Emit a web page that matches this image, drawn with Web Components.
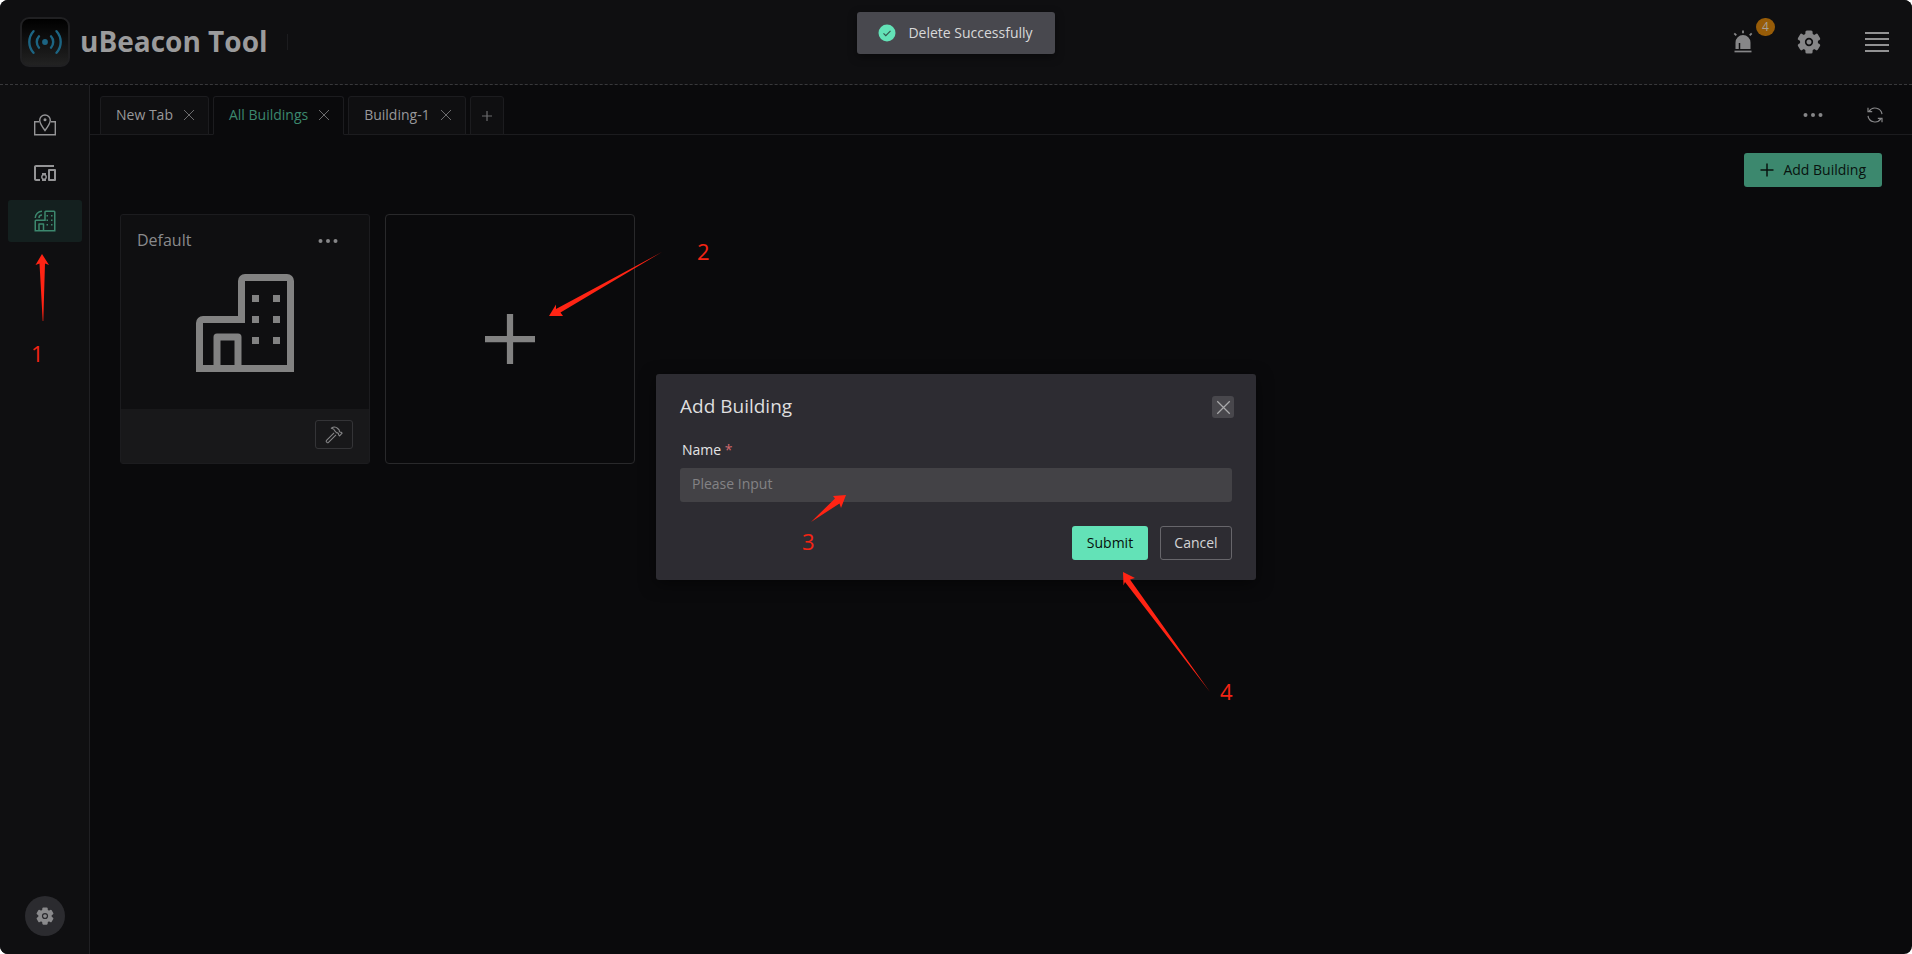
<!DOCTYPE html>
<html lang="en">
<head>
<meta charset="utf-8">
<title>uBeacon Tool</title>
<style>
html, body { margin: 0; height: 100%; background: #fff; }
body { font: 15px/24px "Open Sans", "Noto Sans", sans-serif; color: #868688; --accent: #3c886e; --line: #1c1c1f; --panel: #0f0f11; }
</style>
</head>
<body>
<beacon-app></beacon-app>
<script>
const icons = {
  map: '<svg viewBox="0 0 24 24" width="24" height="24" fill="none" stroke="currentColor" stroke-width="1.4"><path d="M6 8.700H1.700v13.100h20.600V8.700H18"/><path d="M12 17.500C9 13.600 6.700 10.600 6.700 7.300a5.300 5.300 0 0 1 10.600 0c0 3.300-2.300 6.300-5.300 10.200z"/><circle cx="12" cy="6.800" r="1.500" fill="currentColor" stroke="none"/></svg>',
  devices: '<svg viewBox="0 0 24 24" width="24" height="24" fill="currentColor"><path d="M3 6h18V4H3c-1.100 0-2 .9-2 2v12c0 1.100.9 2 2 2h4v-2H3V6zm10 6H9v1.780c-.61.55-1 1.330-1 2.220s.39 1.670 1 2.220V20h4v-1.780c.61-.55 1-1.340 1-2.220s-.39-1.670-1-2.220V12zm-2 5.500c-.83 0-1.500-.67-1.500-1.500s.67-1.500 1.500-1.500 1.500.67 1.500 1.500-.67 1.500-1.500 1.500zM22 8h-6c-.5 0-1 .5-1 1v10c0 .5.5 1 1 1h6c.5 0 1-.5 1-1V9c0-.5-.5-1-1-1zm-1 10h-4v-8h4v8z"/></svg>',
  smart: '<svg viewBox="0 0 32 32" width="24" height="24" fill="currentColor"><path d="M28 2H17a2 2 0 0 0-2 2v10H4a2 2 0 0 0-2 2v14h28V4a2 2 0 0 0-2-2ZM9 28v-7h4v7Zm19 0H15v-8a1 1 0 0 0-1-1H8a1 1 0 0 0-1 1v8H4V16h13V4h11Z"/><path d="M18 8h2v2h-2zM24 8h2v2h-2zM18 14h2v2h-2zM24 14h2v2h-2zM18 20h2v2h-2zM24 20h2v2h-2z"/><path d="M3 12a9 9 0 0 1 9-9M8 12a4 4 0 0 1 4-4" fill="none" stroke="currentColor" stroke-width="2"/></svg>',
  building: '<svg viewBox="0 0 32 32" width="112" height="112" fill="currentColor"><path d="M28 2H16a2 2 0 0 0-2 2v10H4a2 2 0 0 0-2 2v14h28V4a2 2 0 0 0-2-2ZM9 28v-7h4v7Zm19 0H15v-8a1 1 0 0 0-1-1H8a1 1 0 0 0-1 1v8H4V16H16V4h12Z"/><path d="M18 8h2v2h-2zM24 8h2v2h-2zM18 14h2v2h-2zM24 14h2v2h-2zM18 20h2v2h-2zM24 20h2v2h-2z"/></svg>',
  bigplus: '<svg viewBox="0 0 32 32" width="100" height="100" fill="currentColor"><path d="M17 15V8h-2v7H8v2h7v7h2v-7h7v-2z"/></svg>',
  plus: '<svg viewBox="0 0 14 14" width="14" height="14" stroke="currentColor" stroke-width="1.500"><path d="M7 .5v13M.5 7h13"/></svg>',
  thinplus: '<svg viewBox="0 0 12 12" width="12" height="12" stroke="currentColor" stroke-width="1.200"><path d="M6 1v10M1 6h10"/></svg>',
  x: '<svg viewBox="0 0 12 12" width="12" height="12" stroke="currentColor" stroke-width="1"><path d="M1 1l10 10M11 1L1 11"/></svg>',
  dots: '<svg viewBox="0 0 20 6" width="20" height="6" fill="currentColor"><circle cx="2.500" cy="3" r="2"/><circle cx="10" cy="3" r="2"/><circle cx="17.500" cy="3" r="2"/></svg>',
  gear: '<svg viewBox="-12 -12 24 24" width="100%" height="100%" fill="currentColor"><defs><mask id="m"><rect x="-12" y="-12" width="24" height="24" fill="#fff"/><circle r="3.300" fill="none" stroke="#000" stroke-width="1.700"/></mask></defs><g mask="url(#m)"><circle r="9"/><rect x="-3.600" y="-11.500" width="7.200" height="23" rx="1.500"/><rect x="-3.600" y="-11.500" width="7.200" height="23" rx="1.500" transform="rotate(60)"/><rect x="-3.600" y="-11.500" width="7.200" height="23" rx="1.500" transform="rotate(120)"/></g></svg>',
  siren: '<svg viewBox="0 0 24 24" width="24" height="24"><path d="M4.500 19v-6.500a7.500 7.500 0 0 1 15 0V19z" fill="currentColor"/><path d="M8.500 19v-6" stroke="#0f0f11" stroke-width="1.500"/><path d="M3.500 21.500h17" stroke="currentColor" stroke-width="1.700"/><path d="M12 .5v2.800M3.300 3.300l2 2M20.700 3.300l-2 2" stroke="currentColor" stroke-width="1.800"/></svg>',
  menu: '<svg viewBox="0 0 24 22" width="24" height="22" stroke="currentColor" stroke-width="2"><path d="M0 2h24M0 8h24M0 14h24M0 20h24"/></svg>',
  sync: '<svg viewBox="0 0 18 18" width="18" height="18" fill="none" stroke="currentColor" stroke-width="1.200"><path d="M2 9.800A7.100 7.100 0 0 0 15 12.700M16 8.200A7.100 7.100 0 0 0 3 5.300"/><path d="M2 1.700v4h4.200M16 16.300v-4h-4.200"/></svg>',
  hammer: '<svg viewBox="0 0 18 18" width="18" height="18" fill="none" stroke="currentColor" stroke-width="1.100" stroke-linejoin="round"><path d="M9.100 6.900L1.500 14.400a1.100 1.100 0 0 0 0 1.500l.5.500a1.100 1.100 0 0 0 1.500 0L11 8.800"/><path d="M6.300 2.300C8.500.6 11 .8 12.700 2.500l1.600 1.700v1.200l.8.800h1l1 1-2.500 2.600-1-1v-1l-.8-.9h-1.100L10 5.200C9.500 3.600 8 2.500 6.300 2.300z"/></svg>',
  ok: '<svg viewBox="0 0 18 18" width="18" height="18"><circle cx="9" cy="9" r="8.500" fill="#63e2b7"/><path d="M5.500 9.300l2.300 2.300 4.700-4.700" fill="none" stroke="#35564d" stroke-width="1.200"/></svg>',
  logo: '<svg viewBox="0 0 36 26" width="36" height="26" fill="none" stroke="#1c6482" stroke-width="2.400" stroke-linecap="round"><circle cx="18" cy="13" r="2.900" fill="#1c6482" stroke="none"/><path d="M12 7.300a8.500 8.500 0 0 0 0 11.400M24 7.300a8.500 8.500 0 0 1 0 11.400M6.500 2.200a16 16 0 0 0 0 21.600M29.500 2.200a16 16 0 0 1 0 21.600"/></svg>'
};
const base = `*{box-sizing:border-box}svg{display:block}button{font:inherit;color:inherit;background:none;border:0;padding:0;margin:0;cursor:pointer}`;
function define(name, css, html) {
  customElements.define(name, class extends HTMLElement {
    constructor() {
      super();
      const root = this.attachShadow({ mode: 'open' });
      root.innerHTML = `<style>${base}${css}</style>${html}`;
    }
  });
}

define('app-header', `
:host{display:flex;align-items:center;height:85px;padding:0 23px 0 20px;background:var(--panel);border-bottom:1px dashed #38383b}
.logo{display:grid;place-items:center;width:50px;height:50px;border:2px solid #202022;border-radius:9px;background:linear-gradient(#000,#222)}
h1{margin:0 0 0 10px;padding-bottom:2px;font-size:28px;line-height:40px;font-weight:700;color:#9b9b9c}
.rule{width:1px;height:16px;margin-left:19px;background:#1c1c1f}
.tools{display:flex;align-items:center;margin-left:auto}
.alarm{position:relative;margin-right:42px}
.badge{position:absolute;left:25px;top:-12px;width:19px;height:18px;border-radius:9px;background:#975c08;color:#a5a09a;font-size:12px;line-height:18px;text-align:center}
.gear{width:24px;height:24px;margin-right:44px}
.menu{color:#929293}
`, `<span class="logo">${icons.logo}</span><h1>uBeacon Tool</h1><span class="rule"></span>
<div class="tools"><button class="alarm" aria-label="Alarms">${icons.siren}<span class="badge">4</span></button>
<button class="gear" aria-label="Settings">${icons.gear}</button><button class="menu" aria-label="Menu">${icons.menu}</button></div>`);

define('side-bar', `
:host{display:flex;flex-direction:column;justify-content:space-between;width:90px;padding:19px 7px 18px 8px;background:var(--panel);border-right:1px solid #202023}
nav{display:flex;flex-direction:column;gap:6px}
a{display:grid;place-items:center;height:42px;border-radius:3px;color:#949496}
a[aria-current]{background:#14201f;color:var(--accent)}
.round{display:grid;place-items:center;align-self:center;width:40px;height:40px;border-radius:50%;background:#2b2b2f;color:#8a8a8c}
.round span{width:18px;height:18px}
`, `<nav><a href="#map" aria-label="Map">${icons.map}</a><a href="#devices" aria-label="Devices">${icons.devices}</a><a href="#buildings" aria-label="Buildings" aria-current="page">${icons.smart}</a></nav>
<button class="round" aria-label="Preferences"><span>${icons.gear}</span></button>`);

define('tab-item', `
:host{display:flex;align-items:center;height:39px;padding:0 13px 2px 15px;border:1px solid var(--line);border-radius:3px 3px 0 0;background:var(--panel);color:#98989a}
:host([selected]){color:var(--accent);background:transparent;border-bottom-color:#0a0a0c}
.close{color:#6c6c6e}
.name{font-size:14px;line-height:20px;margin-right:10px}
`, `<button class="name"><slot></slot></button><button class="close" aria-label="Close tab">${icons.x}</button>`);

define('tab-strip', `
:host{display:flex;align-items:flex-start;height:50px;padding:11px 28px 0 10px;background:linear-gradient(var(--line),var(--line)) bottom/100% 1px no-repeat}
.tabs{display:flex;gap:4px}
.new{display:grid;place-items:center;width:34px;height:39px;border:1px solid var(--line);border-radius:3px 3px 0 0;background:var(--panel);color:#6c6c6e}
.actions{display:flex;align-items:center;gap:43px;height:38px;margin-left:auto}
`, `<div class="tabs"><tab-item>New Tab</tab-item><tab-item selected>All Buildings</tab-item><tab-item>Building-1</tab-item><button class="new" aria-label="New tab">${icons.thinplus}</button></div>
<div class="actions"><button aria-label="More">${icons.dots}</button><button aria-label="Refresh">${icons.sync}</button></div>`);

define('building-card', `
:host{display:flex;flex-direction:column;width:250px;height:250px;border:1px solid var(--line);border-radius:3px;background:var(--panel)}
header{display:flex;align-items:center;justify-content:space-between;padding:13px 31px 0 16px;height:38px}
h2{margin:0;padding-bottom:2px;font-size:16px;line-height:24px;font-weight:400;color:#8a8a8c}
.art{flex:1;display:flex;justify-content:center;padding-top:14px;color:#828282}
footer{display:flex;justify-content:flex-end;padding:11px 16px 14px;background:#18181a}
footer button{display:grid;place-items:center;width:38px;height:29px;border:1px solid #343437;border-radius:3px}
`, `<header><h2><slot></slot></h2><button aria-label="More">${icons.dots}</button></header><div class="art">${icons.building}</div><footer><button aria-label="Edit building">${icons.hammer}</button></footer>`);

define('add-card', `
:host{display:block;width:250px;height:250px}
button{display:grid;place-items:center;width:100%;height:100%;border:1px solid #29292b;border-radius:4px;color:#828282}
`, `<button aria-label="Add building card">${icons.bigplus}</button>`);

define('building-list', `
:host{display:block;padding:18px 30px}
.bar{display:flex;justify-content:flex-end;margin-bottom:27px}
.add{display:flex;align-items:center;gap:9px;height:34px;padding:0 16px;border-radius:3px;background:var(--accent);color:#08130f;font-size:14px;line-height:34px}
.cards{display:flex;flex-wrap:wrap;gap:15px}
`, `<div class="bar"><button class="add">${icons.plus}<span>Add Building</span></button></div>
<div class="cards"><building-card>Default</building-card><add-card></add-card></div>`);

define('toast-message', `
:host{display:flex;align-items:center;gap:12px;height:42px;padding:0 22px 0 21px;border-radius:3px;background:#48484e;color:#d8d8d9;font-size:14px;line-height:20px;box-shadow:0 3px 10px rgba(0,0,0,.4)}
`, `${icons.ok}<span><slot></slot></span>`);

define('add-dialog', `
:host{display:block;width:600px;max-width:100%;padding:22px 24px 20px;border-radius:3px;background:#2d2c32;color:#dededf;box-shadow:0 4px 16px rgba(0,0,0,.5)}
header{display:flex;justify-content:space-between;align-items:center;height:22px;margin-right:-2px}
h2{margin:0;padding-bottom:2px;font-size:19px;line-height:22px;font-weight:400}
.close{display:grid;place-items:center;width:22px;height:22px;border-radius:3px;background:#48474c;color:#a9a9ab}
.close svg{width:15px;height:15px}
label{display:block;margin:20px 2px 6px;font-size:14px;line-height:24px;color:#e4e4e5;font-weight:500}
label span{color:#d0686c}
input{display:block;width:100%;height:34px;padding:0 12px 3px;border:0;border-radius:3px;outline:0;background:#434246;color:#ddd;font:inherit;font-size:14px}
input::placeholder{color:#838285;opacity:1}
.row{display:flex;justify-content:flex-end;gap:12px;margin-top:24px}
.row button{height:34px;border-radius:3px;font-size:14px;line-height:20px}
.ok{width:76px;background:#63e2b7;color:#06100c}
.row .no{width:72px;border:1px solid #67666b;color:#d4d4d6}
`, `<header><h2>Add Building</h2><button class="close" aria-label="Close">${icons.x}</button></header>
<form onsubmit="return false"><label for="name">Name <span>*</span></label><input id="name" placeholder="Please Input" required>
<div class="row"><button class="ok" type="submit">Submit</button><button class="no" type="button">Cancel</button></div></form>`);

define('step-notes', `
:host{position:absolute;inset:0;pointer-events:none;color:#f42414}
svg{position:absolute;left:0;top:0;overflow:visible}
b{position:absolute;font-size:22px;line-height:30px;font-weight:400}
.left{position:absolute;left:0;top:0}.mid{position:absolute;left:50%;top:50%}
`, `<div class="left"><svg width="1" height="1" fill="#ff2414"><path d="M42 254l7 11-4-1.500L43.300 321h-.6L39.500 263.500l-4 1.500z"/><path d="M549 316l7-11.500 0 4.500L662 252 560.500 312.500l2.500 3.500z"/></svg>
<b style="left:31px;top:338px">1</b><b style="left:697px;top:236px">2</b></div>
<div class="mid"><svg width="1" height="1" fill="#ff2414"><path d="M-110 18l-5 13-1.500-4.500L-145 45l24-23.500-2-2.500z"/><path d="M167 95l12 6-5 1.500L254 215 169 105l-1.500 3.500z"/></svg>
<b style="left:-154px;top:49px">3</b><b style="left:264px;top:199px">4</b></div>`);

define('beacon-app', `
:host{position:relative;display:flex;flex-direction:column;min-height:100vh;border-radius:8px;overflow:hidden;background:#0a0a0c}
.body{flex:1;display:flex}
main{flex:1;min-width:0}
.toast{position:absolute;top:12px;left:0;right:0;display:flex;justify-content:center}
.modal{position:absolute;inset:0;display:grid;place-items:center}
`, `<app-header></app-header><div class="body"><side-bar></side-bar><main><tab-strip></tab-strip><building-list></building-list></main></div>
<div class="modal"><add-dialog role="dialog" aria-label="Add Building"></add-dialog></div>
<div class="toast"><toast-message role="status">Delete Successfully</toast-message></div><step-notes></step-notes>`);
</script>
</body>
</html>
